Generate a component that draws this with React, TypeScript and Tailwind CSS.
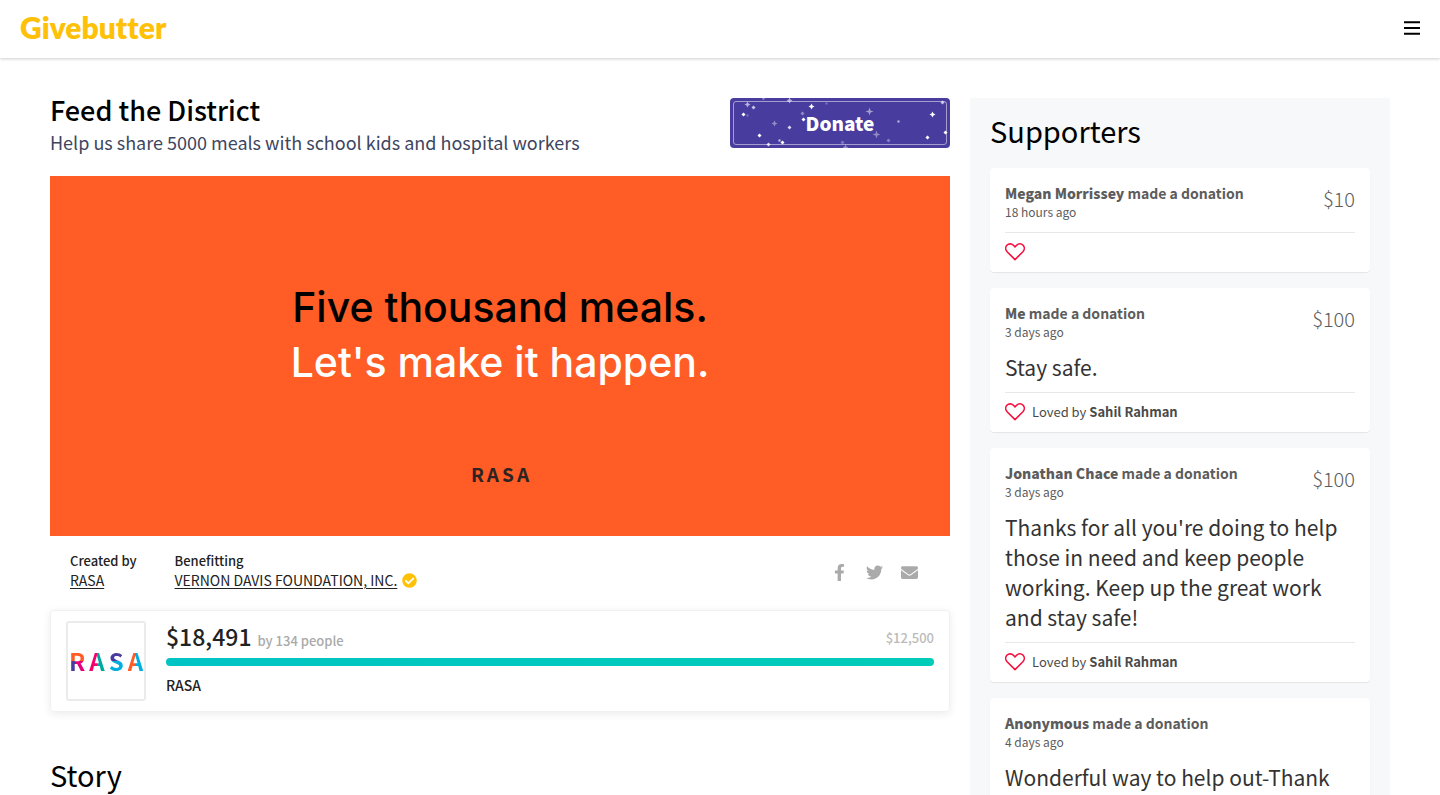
import React from "react";
import { FaCheckCircle, FaEnvelope, FaFacebookF, FaTwitter } from "react-icons/fa";

type Donation = {
  name: string;
  time: string;
  amount: string;
  message?: string;
  lovedBy?: string;
};

const donations: Donation[] = [
  { name: "Megan Morrissey", time: "18 hours ago", amount: "$10" },
  { name: "Me", time: "3 days ago", amount: "$100", message: "Stay safe.", lovedBy: "Sahil Rahman" },
  {
    name: "Jonathan Chace",
    time: "3 days ago",
    amount: "$100",
    message:
      "Thanks for all you're doing to help those in need and keep people working. Keep up the great work and stay safe!",
    lovedBy: "Sahil Rahman",
  },
  { name: "Anonymous", time: "4 days ago", amount: "", message: "Wonderful way to help out-Thank" },
];

// x, y, arm length, opacity
const stars: [number, number, number, number][] = [
  [17, 6, 3, 0.6], [23, 9, 2, 0.7], [33, 0, 1, 0.5], [59, 2, 3, 0.6], [81, 8, 3, 1],
  [96, 5, 1, 0.3], [13, 16, 2, 1], [17, 17, 1, 0.3], [44, 25, 3, 0.4], [29, 37, 2, 1],
  [59, 29, 2, 0.8], [72, 15, 2, 0.4], [73, 21, 2, 1], [139, 13, 4, 0.5], [146, 36, 4, 0.4],
  [168, 23, 1, 0.7], [158, 42, 2, 0.35], [202, 16, 3, 1], [197, 39, 2, 1], [212, 4, 2, 0.7],
  [215, 34, 2, 1], [49, 42, 1, 0.8], [52, 44, 2, 1], [38, 46, 2, 0.8], [112, 44, 2, 0.3],
  [115, 49, 3, 0.4],
];

function Stars() {
  return (
    <svg className="absolute inset-0 h-full w-full" viewBox="0 0 220 50" preserveAspectRatio="none" aria-hidden="true">
      {stars.map(([x, y, r, o]) => (
        <path
          key={`${x}-${y}`}
          transform={`translate(${x + 0.5} ${y + 0.5})`}
          opacity={o}
          fill="#fff"
          d={`M0 ${-r}L1 -1L${r} 0L1 1L0 ${r}L-1 1L${-r} 0L-1 -1Z`}
        />
      ))}
    </svg>
  );
}

function Heart() {
  return (
    <svg className="h-5 w-5" viewBox="0 0 20 20" fill="none" stroke="#f5113f" strokeWidth="1.6" strokeLinejoin="round" aria-hidden="true">
      <path d="M10 17.6 L2.1 9.7 C.3 7.8 .3 5 1.9 3.2 C3.7 1.4 6.6 1.5 8.4 3.3 L10 4.9 L11.6 3.3 C13.4 1.5 16.3 1.4 18.1 3.2 C19.7 5 19.7 7.8 17.9 9.7 Z" />
    </svg>
  );
}

function DonationCard({ name, time, amount, message, lovedBy }: Donation) {
  return (
    <li className="rounded bg-white px-[15px] pt-[14px] shadow-[0_1px_1px_rgba(0,0,0,0.08)]">
      <div className="flex justify-between pb-3 text-[#5c5c5c]">
        <div>
          <p className="text-[14px] font-bold leading-[22px]">
            <strong className="font-black">{name}</strong> made a donation
          </p>
          <p className="text-[12px] leading-4">{time}</p>
        </div>
        <p className="text-[20px] font-light leading-[34px]">{amount}</p>
      </div>
      {message && <p className="pb-[10px] text-[21px] leading-[30px] text-[#333]">{message}</p>}
      <div className="flex h-10 items-center gap-[7px] border-t border-[#e8e8e8] pb-0.5 text-[13px] text-[#4a4a4a]">
        <button type="button" aria-label="Love this donation">
          <Heart />
        </button>
        {lovedBy && (
          <span>
            Loved by <strong className="font-bold">{lovedBy}</strong>
          </span>
        )}
      </div>
    </li>
  );
}

export default function App() {
  return (
    <div className="min-h-screen bg-white font-['Noto_Sans_CJK_SC',sans-serif] text-[#222]">
      <header className="flex h-[58px] items-center justify-between px-5 pb-0.5 shadow-[0_1px_3px_rgba(0,0,0,0.2)]">
        <a
          href="#"
          className="pb-0.5 font-['Lato',sans-serif] text-[30px] font-extrabold leading-10 text-[#ffc107] [font-variant-ligatures:none]"
        >
          Givebutter
        </a>
        <button type="button" aria-label="Menu">
          <svg width="16" height="14" viewBox="0 0 16 14" aria-hidden="true">
            <path d="M0 .2h16v2.1H0zM0 5.9h16v2.2H0zM0 11.7h16v2.1H0z" />
          </svg>
        </button>
      </header>

      <div className="flex items-start gap-5 px-[50px] pt-10">
        <main className="min-w-0 flex-1">
          <div className="flex items-start justify-between">
            <div>
              <h1 className="text-[27px] font-medium leading-6 text-black">Feed the District</h1>
              <p className="pt-[5px] text-[18px] leading-[30px] text-[#3d4660]">
                Help us share 5000 meals with school kids and hospital workers
              </p>
            </div>
            <button type="button" className="relative h-[50px] w-[220px] overflow-hidden rounded bg-[#483d9f] p-[3px] text-white">
              <Stars />
              <span className="relative flex h-full items-center justify-center rounded-[3px] border border-white/50 text-[19px] font-black">
                Donate
              </span>
            </button>
          </div>

          <section className="mt-[19px] flex h-[360px] flex-col items-center bg-[#ff5c26] pt-[104px] font-['Inter',sans-serif] text-[41px] font-medium leading-[55px]">
            <p className="text-black">Five thousand meals.</p>
            <p className="text-white">Let's make it happen.</p>
            <p className="mt-[71px] flex gap-[3px] font-['Noto_Sans_CJK_SC',sans-serif] text-[19px] font-bold leading-[26px] text-[#2d2323]">
              <span>R</span><span>A</span><span>S</span><span>A</span>
            </p>
          </section>

          <div className="flex items-center justify-between pb-5 pl-5 pr-8 pt-[15px]">
            <div className="flex gap-[38px]">
              <div>
                <p className="text-[13px] font-medium leading-[19px]">Created by</p>
                <a href="#" className="block text-[14px] leading-5 underline underline-offset-2">RASA</a>
              </div>
              <div>
                <p className="text-[13px] font-medium leading-[19px]">Benefitting</p>
                <div className="flex items-center gap-[5px]">
                  <a href="#" className="text-[14px] leading-5 underline underline-offset-2">VERNON DAVIS FOUNDATION, INC.</a>
                  <FaCheckCircle className="text-[15px] text-[#ffc107]" aria-label="Verified" />
                </div>
              </div>
            </div>
            <div className="flex items-center gap-[18px] pt-1 text-[17px] text-[#aaa]">
              <a href="#" aria-label="Share on Facebook"><FaFacebookF /></a>
              <a href="#" aria-label="Share on Twitter"><FaTwitter /></a>
              <a href="#" aria-label="Share by email"><FaEnvelope /></a>
            </div>
          </div>

          <section className="flex gap-5 rounded border border-[#f0f0f0] px-[15px] py-[10px] shadow-[0_2px_8px_rgba(0,0,0,0.08)]">
            <div className="flex h-20 w-20 shrink-0 items-center justify-center gap-1 rounded-[3px] border-2 border-[#ebebeb] text-[24px] font-bold leading-none">
              <span className="bg-[conic-gradient(from_90deg_at_45%_50%,#e6007e_0_25%,#483d9f_0_50%,#ff5c26_0)] bg-clip-text text-transparent">R</span>
              <span className="bg-[linear-gradient(90deg,#f5006e_50%,#00a99d_50%)] bg-clip-text text-transparent">A</span>
              <span className="bg-[linear-gradient(180deg,#483d9f_50%,#00aee0_50%)] bg-clip-text text-transparent">S</span>
              <span className="bg-[linear-gradient(90deg,#ff5c26_50%,#00aee0_50%)] bg-clip-text text-transparent">A</span>
            </div>
            <div className="min-w-0 flex-1">
              <div className="flex h-[34px] items-center justify-between">
                <p className="flex items-baseline gap-[6px] font-medium leading-[34px]">
                  <span className="text-[23px]">$18,491</span>
                  <span className="text-[13px] text-[#aaa]">by 134 people</span>
                </p>
                <p className="text-[13px] font-medium text-[#bbb]">$12,500</p>
              </div>
              <div role="progressbar" aria-label="Raised" aria-valuenow={100} className="mt-[3px] h-2 rounded-full bg-linear-to-r from-[#00c4c4] to-[#00ccb8]" />
              <p className="pt-2 text-[14px] font-medium leading-[22px]">RASA</p>
            </div>
          </section>

          <h2 className="pt-[42px] text-[29px] leading-10 text-black">Story</h2>
        </main>

        <aside className="w-[420px] shrink-0 bg-[#f7f8fa] px-5 pb-5 pt-[18px]">
          <h2 className="pb-6 text-[29px] leading-7 text-black">Supporters</h2>
          <ul className="flex flex-col gap-4">
            {donations.map((d) => (
              <DonationCard key={d.name} {...d} />
            ))}
          </ul>
        </aside>
      </div>
    </div>
  );
}
